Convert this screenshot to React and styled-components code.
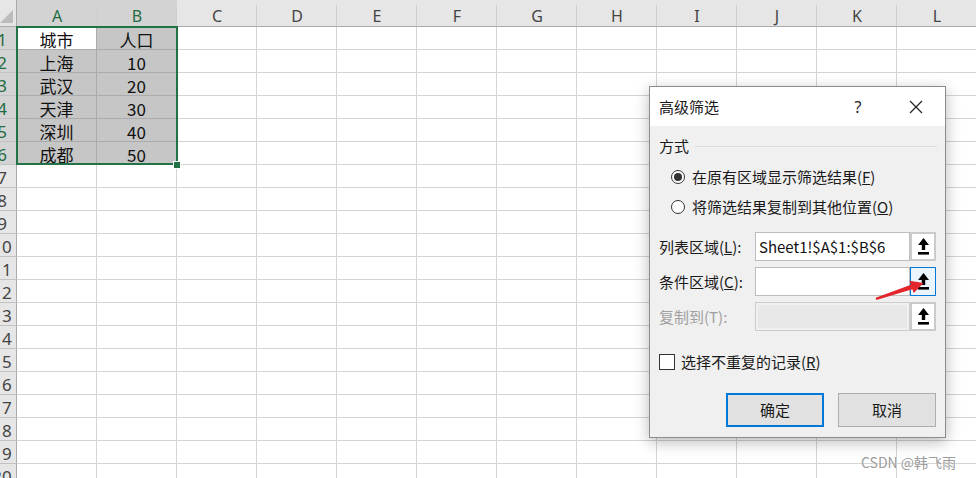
import React from 'react';
import styled, { createGlobalStyle, css } from 'styled-components';

const GlobalStyle = createGlobalStyle`
  html, body {
    margin: 0;
    padding: 0;
    background: #fff;
  }
  body {
    width: 976px;
    height: 478px;
    overflow: hidden;
    font-family: "Noto Sans CJK SC", "Noto Sans", sans-serif;
  }
`;

const COLS = ['A', 'B', 'C', 'D', 'E', 'F', 'G', 'H', 'I', 'J', 'K', 'L'];
const ROW_COUNT = 20;

// the data range A1:B6, all of it selected, A1 active
const data = [
  ['城市', '人口'],
  ['上海', '10'],
  ['武汉', '20'],
  ['天津', '30'],
  ['深圳', '40'],
  ['成都', '50'],
];

const Sheet = styled.div`
  position: relative;
  width: 976px;
  height: 478px;
  overflow: hidden;
`;

const Grid = styled.div`
  display: grid;
  grid-template-columns: 17px repeat(12, 80px);
  grid-template-rows: 27px repeat(${ROW_COUNT}, 23px);
`;

const Corner = styled.div`
  position: relative;
  box-sizing: border-box;
  background: #e6e6e6;
  border-right: 1px solid #ababab;
  border-bottom: 1px solid #ababab;

  &::after {
    content: '';
    position: absolute;
    right: 3px;
    bottom: 3px;
    width: 0;
    height: 0;
    border-left: 13px solid transparent;
    border-bottom: 13px solid #bcbcbc;
  }
`;

const ColHeader = styled.div`
  position: relative;
  box-sizing: border-box;
  padding-top: 6px;
  overflow: hidden;
  text-align: center;
  font: 16px/20px "Noto Sans", sans-serif;
  color: ${(p) => (p.$sel ? '#1f6b42' : '#444')};
  background: ${(p) => (p.$sel ? '#d3d3d3' : '#e6e6e6')};
  border-bottom: 1px solid #ababab;

  &::after {
    content: '';
    position: absolute;
    right: 0;
    top: 5px;
    bottom: 0;
    width: 1px;
    background: #cfcfcf;
  }
`;

const RowHeader = styled.div`
  box-sizing: border-box;
  display: flex;
  align-items: center;
  padding-top: 3px;
  overflow: hidden;
  font: 17px/20px "Noto Sans", sans-serif;
  color: ${(p) => (p.$sel ? '#1f6b42' : '#444')};
  background: ${(p) => (p.$sel ? '#d3d3d3' : '#e6e6e6')};
  border-right: 1px solid #ababab;
  border-bottom: 1px solid #c2c2c2;
`;

const RowNum = styled.span`
  flex: none;
  width: 34px;
  margin-left: -15px;
  text-align: center;
`;

const Cell = styled.div`
  box-sizing: border-box;
  display: flex;
  align-items: center;
  justify-content: center;
  padding-top: 3px;
  font: 17px/20px "Noto Sans CJK SC", sans-serif;
  color: #111;
  background: ${(p) => (p.$active ? '#fff' : p.$sel ? '#c6c6c6' : '#fff')};
  border-right: 1px solid ${(p) => (p.$sel ? '#ababab' : '#d4d4d4')};
  border-bottom: 1px solid ${(p) => (p.$sel ? '#ababab' : '#d4d4d4')};
`;

const Selection = styled.div`
  position: absolute;
  left: 16px;
  top: 26px;
  width: 162px;
  height: 139px;
  box-sizing: border-box;
  border: 2px solid #217346;
  pointer-events: none;
`;

const FillHandle = styled.div`
  position: absolute;
  right: -4px;
  bottom: -5px;
  width: 6px;
  height: 6px;
  background: #217346;
  box-shadow: 0 0 0 1px #fff;
`;

/* ---------- dialog ---------- */

const Dialog = styled.div`
  position: absolute;
  left: 649px;
  top: 86px;
  width: 297px;
  height: 352px;
  box-sizing: border-box;
  display: flex;
  flex-direction: column;
  background: #f0f0f0;
  border: 1px solid #8c8c8c;
  box-shadow: 0 4px 14px rgba(0, 0, 0, 0.28);
  font: 15px/20px "Noto Sans CJK SC", sans-serif;
  color: #1a1a1a;
`;

const TitleBar = styled.div`
  height: 39px;
  flex: none;
  display: flex;
  align-items: center;
  padding-left: 9px;
  background: #fff;
`;

const Title = styled.div`
  flex: 1;
`;

const TitleButton = styled.div`
  width: ${(p) => p.$w}px;
  height: 39px;
  display: flex;
  align-items: center;
  justify-content: center;
  font: 16px/20px "Noto Sans", sans-serif;
  color: #222;
`;

const Body = styled.div`
  flex: 1;
  display: flex;
  flex-direction: column;
  padding: 0 9px;
`;

const GroupHead = styled.div`
  margin-top: 9px;
  margin-bottom: 5px;
  height: 22px;
  display: flex;
  align-items: center;
  gap: 6px;

  &::after {
    content: '';
    flex: 1;
    height: 1px;
    margin-right: -1px;
    background: #dcdcdc;
  }
`;

const OptionRow = styled.label`
  height: 30px;
  display: flex;
  align-items: center;
  gap: 7px;
  padding-left: 12px;
`;

const Radio = styled.span`
  position: relative;
  flex: none;
  width: 14px;
  height: 14px;
  box-sizing: border-box;
  border-radius: 50%;
  border: 1px solid #333;
  background: #fff;

  ${(p) =>
    p.$checked &&
    css`
      &::after {
        content: '';
        position: absolute;
        inset: 2px;
        border-radius: 50%;
        background: #333;
      }
    `}
`;

const Fields = styled.div`
  margin-top: 10px;
  display: flex;
  flex-direction: column;
  gap: 6px;
`;

const FieldRow = styled.div`
  height: 29px;
  display: flex;
  align-items: center;
  color: ${(p) => (p.$disabled ? '#a0a0a0' : 'inherit')};
`;

const FieldLabel = styled.div`
  width: 96px;
  flex: none;
`;

const RangeInput = styled.div`
  width: 157px;
  height: 29px;
  box-sizing: border-box;
  padding: 0 3px;
  display: flex;
  align-items: center;
  background: #fff;
  border: 1px solid #bdbdbd;
  color: #111;
  white-space: nowrap;

  ${(p) =>
    p.$disabled &&
    css`
      background: #e8e8e8;
      border-color: #cccccc;
      box-shadow: inset 0 0 0 2px #f0f0f0;
    `}
`;

const PickButton = styled.div`
  width: 26px;
  height: 29px;
  box-sizing: border-box;
  display: flex;
  align-items: center;
  justify-content: center;
  background: ${(p) => (p.$focus ? '#eaf4fc' : '#fff')};
  border: ${(p) => (p.$focus ? '1px solid #0078d7' : '2px solid #cbcbcb')};
`;

const CheckRow = styled.label`
  margin-top: 20px;
  height: 22px;
  display: flex;
  align-items: center;
  gap: 6px;
`;

const CheckBox = styled.span`
  flex: none;
  width: 16px;
  height: 16px;
  box-sizing: border-box;
  border: 1px solid #333;
  background: #fff;
`;

const Buttons = styled.div`
  margin-top: 20px;
  display: flex;
  justify-content: flex-end;
  gap: 14px;
`;

const Button = styled.div`
  width: 98px;
  height: 34px;
  box-sizing: border-box;
  display: flex;
  align-items: center;
  justify-content: center;
  background: #e1e1e1;
  border: ${(p) => (p.$primary ? '2px solid #0078d7' : '1px solid #adadad')};
`;

const Arrow = styled.svg`
  position: absolute;
  left: 870px;
  top: 275px;
  pointer-events: none;
`;

const Watermark = styled.div`
  position: absolute;
  left: 861px;
  top: 452px;
  font: 14px/20px "Noto Sans CJK SC", sans-serif;
  color: #9c9c9c;
  text-shadow: 0 0 2px #fff;
`;

const PickIcon = () => (
  <svg width="13" height="19" viewBox="0 0 13 19">
    <path d="M6.5 1 L12 8 L8.2 8 L8.2 13 L4.8 13 L4.8 8 L1 8 Z" fill="#000" />
    <rect x="1" y="15" width="11" height="2.6" fill="#000" />
  </svg>
);

const CloseIcon = () => (
  <svg width="14" height="14" viewBox="0 0 14 14">
    <path d="M1 1 L13 13 M13 1 L1 13" stroke="#222" strokeWidth="1.2" />
  </svg>
);

const AdvancedFilterDialog = () => (
  <Dialog>
    <TitleBar>
      <Title>高级筛选</Title>
      <TitleButton $w={44}>?</TitleButton>
      <TitleButton $w={7} />
      <TitleButton $w={58}>
        <CloseIcon />
      </TitleButton>
    </TitleBar>
    <Body>
      <GroupHead>方式</GroupHead>
      <OptionRow>
        <Radio $checked />
        <span>
          在原有区域显示筛选结果(<u>F</u>)
        </span>
      </OptionRow>
      <OptionRow>
        <Radio />
        <span>
          将筛选结果复制到其他位置(<u>O</u>)
        </span>
      </OptionRow>
      <Fields>
        <FieldRow>
          <FieldLabel>
            列表区域(<u>L</u>):
          </FieldLabel>
          <RangeInput>Sheet1!$A$1:$B$6</RangeInput>
          <PickButton>
            <PickIcon />
          </PickButton>
        </FieldRow>
        <FieldRow>
          <FieldLabel>
            条件区域(<u>C</u>):
          </FieldLabel>
          <RangeInput />
          <PickButton $focus>
            <PickIcon />
          </PickButton>
        </FieldRow>
        <FieldRow $disabled>
          <FieldLabel>复制到(T):</FieldLabel>
          <RangeInput $disabled />
          <PickButton>
            <PickIcon />
          </PickButton>
        </FieldRow>
      </Fields>
      <CheckRow>
        <CheckBox />
        <span>
          选择不重复的记录(<u>R</u>)
        </span>
      </CheckRow>
      <Buttons>
        <Button $primary>确定</Button>
        <Button>取消</Button>
      </Buttons>
    </Body>
  </Dialog>
);

const App = () => {
  const rows = Array.from({ length: ROW_COUNT }, (_, i) => i + 1);

  return (
    <>
      <GlobalStyle />
      <Sheet>
        <Grid>
          <Corner />
          {COLS.map((c, ci) => (
            <ColHeader key={c} $sel={ci < 2}>
              {c}
            </ColHeader>
          ))}
          {rows.map((r) => (
            <React.Fragment key={r}>
              <RowHeader $sel={r <= 6}>
                <RowNum>{r}</RowNum>
              </RowHeader>
              {COLS.map((c, ci) => {
                const inRange = r <= 6 && ci < 2;
                return (
                  <Cell key={c} $sel={inRange} $active={r === 1 && ci === 0}>
                    {inRange ? data[r - 1][ci] : null}
                  </Cell>
                );
              })}
            </React.Fragment>
          ))}
        </Grid>

        <Selection>
          <FillHandle />
        </Selection>

        <AdvancedFilterDialog />

        <Arrow width="60" height="30" viewBox="0 0 60 30">
          <polygon
            points="5.6,22.8 41,9.8 39.5,5.8 53.5,8 43.8,18 42.4,14.2 6.4,25.1"
            fill="#e3262c"
          />
        </Arrow>

        <Watermark>CSDN @韩飞雨</Watermark>
      </Sheet>
    </>
  );
};

export default App;
